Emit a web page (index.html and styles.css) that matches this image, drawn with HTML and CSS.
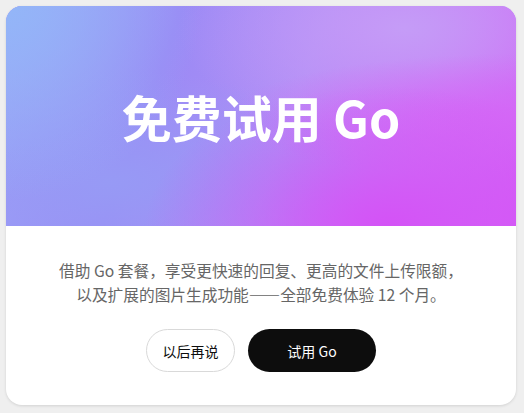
FILE: index.html
```html
<!DOCTYPE html>
<html lang="zh-CN">
<head>
    <meta charset="UTF-8">
    <meta name="viewport" content="width=device-width, initial-scale=1.0">
    <title>免费试用 Go</title>
    <link rel="stylesheet" href="styles.css">
</head>
<body>
    <div class="modal">
        <div class="banner">
            <h1>免费试用 Go</h1>
        </div>
        <div class="content">
            <p>借助 Go 套餐，享受更快速的回复、更高的文件上传限额，<br>以及扩展的图片生成功能——全部免费体验 12 个月。</p>
            <div class="actions">
                <button class="btn btn-secondary">以后再说</button>
                <button class="btn btn-primary">试用 Go</button>
            </div>
        </div>
    </div>
</body>
</html>
```

FILE: styles.css
```css
body {
    font-family: "Noto Sans CJK SC", "Noto Sans", sans-serif;
    margin: 0;
    padding: 6px 8px 8px 6px;
    background-color: #efefef;
}

.modal {
    width: 510px;
    height: 399px;
    background-color: #fff;
    border-radius: 16px;
    overflow: hidden;
    box-shadow: 0 1px 3px rgba(0, 0, 0, 0.12);
    display: flex;
    flex-direction: column;
}

.banner {
    height: 220px;
    display: flex;
    align-items: center;
    justify-content: center;
    background-color: #a98ef6;
    background-image:
        radial-gradient(circle at 0% 0%, #93b6f8 0%, rgba(147, 182, 248, 0) 35%),
        radial-gradient(ellipse at 75% 100%, #d452f6 0%, rgba(212, 82, 246, 0) 45%),
        radial-gradient(ellipse at 100% 50%, #d468f6 0%, rgba(212, 104, 246, 0) 40%),
        radial-gradient(ellipse at 78% 10%, #c59cf7 0%, rgba(197, 156, 247, 0) 40%),
        radial-gradient(ellipse at 20% 80%, #979af5 0%, rgba(151, 154, 245, 0) 45%),
        linear-gradient(110deg, #9ca5f6 0%, #9a8af5 30%, #b28ef6 55%, #cc74f6 80%, #d45ef6 100%);
}

.banner h1 {
    margin: 0;
    color: #fff;
    font-size: 50px;
    font-weight: 700;
    letter-spacing: 0;
    line-height: 1;
}

.content {
    flex: 1;
    text-align: center;
    padding-top: 33px;
}

.content p {
    margin: 0;
    font-size: 15.7px;
    line-height: 24px;
    color: #666;
}

.actions {
    display: flex;
    justify-content: center;
    gap: 13px;
    margin-top: 22px;
}

.btn {
    font-family: inherit;
    font-size: 14px;
    height: 43px;
    border-radius: 22px;
    cursor: pointer;
}

.btn-secondary {
    width: 89px;
    background-color: #fff;
    color: #0d0d0d;
    border: 1px solid #d9d9d9;
}

.btn-primary {
    width: 128px;
    background-color: #0d0d0d;
    color: #fff;
    border: none;
}
```
